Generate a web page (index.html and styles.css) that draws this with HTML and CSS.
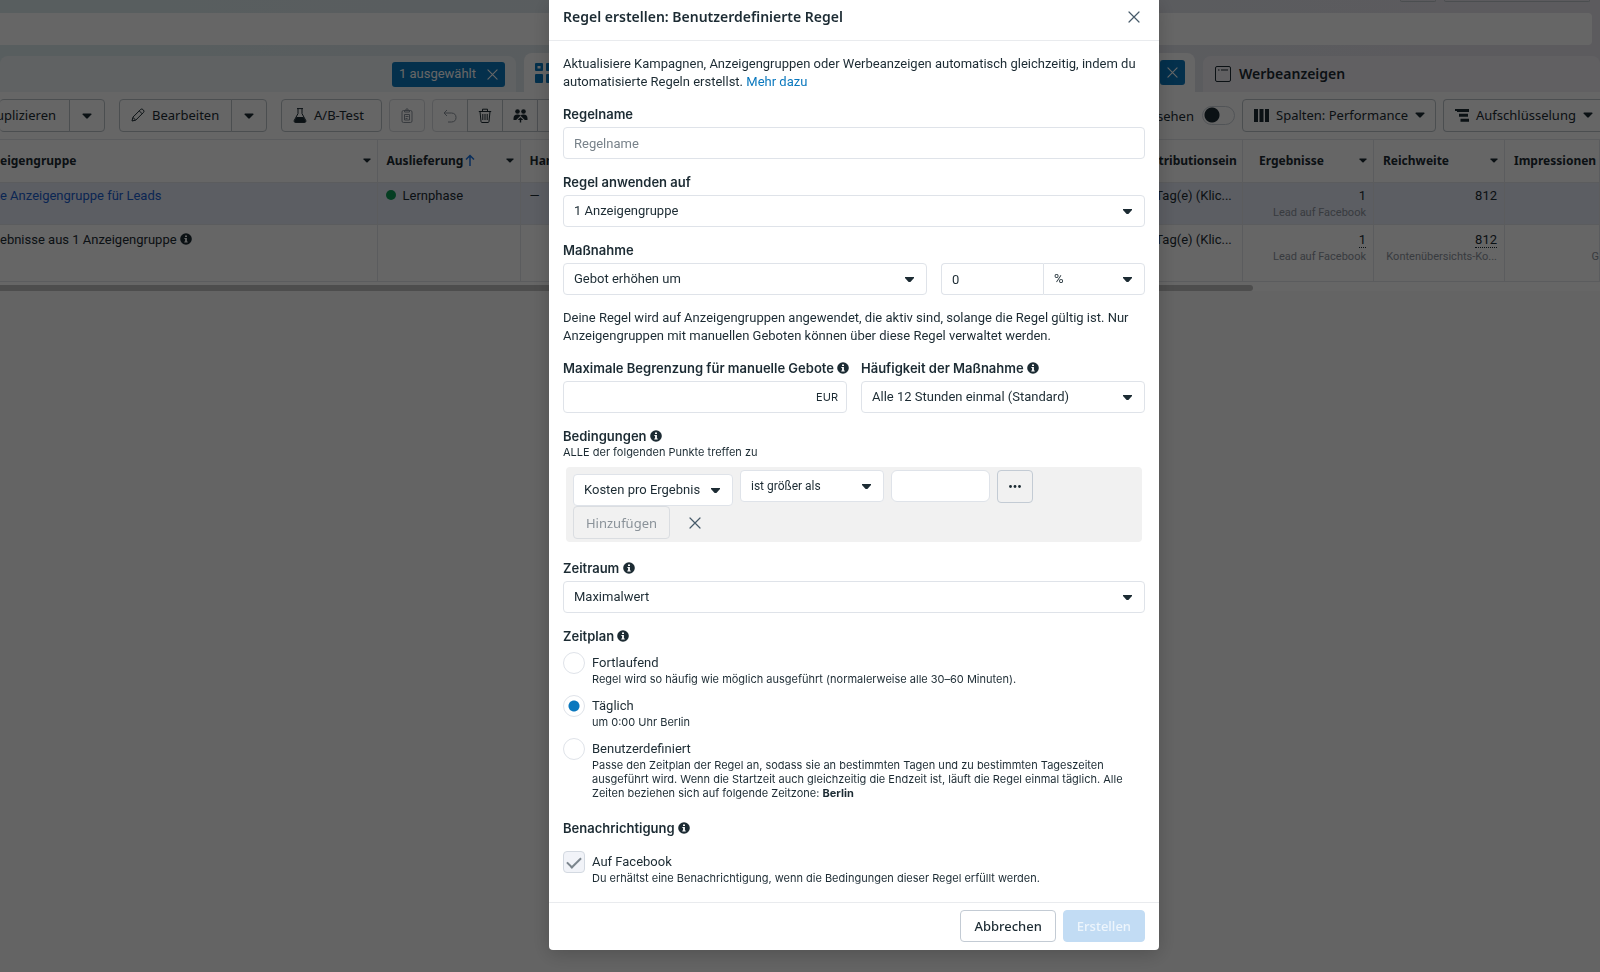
FILE: index.html
```html
<!DOCTYPE html>
<html lang="de">
<head>
  <meta charset="UTF-8" />
  <meta name="viewport" content="width=device-width, initial-scale=1.0"/>
  <title>Regel erstellen</title>
  <link rel="stylesheet" href="styles.css">
</head>
<body>

<!-- Icons -->
<svg class="icon-defs" aria-hidden="true">
  <symbol id="info" viewBox="0 0 12 12">
    <circle cx="6" cy="6" r="5.8" fill="currentColor"/>
    <path d="M5 2.4h2v1.7H5zM4.4 5h2.5v3.4h.8v1H4.3v-1h.8V6h-.7z" fill="#fff"/>
  </symbol>
  <symbol id="close" viewBox="0 0 12 12">
    <path d="M1 1l10 10M11 1L1 11" fill="none" stroke="currentColor" stroke-width="1.2" stroke-linecap="round"/>
  </symbol>
  <symbol id="caret" viewBox="0 0 10 6">
    <path d="M1 .4h8q.9.2.4 1.1L5.8 5.3q-.8.7-1.6 0L.6 1.500Q.1.6 1 .4z" fill="currentColor"/>
  </symbol>
</svg>

<div class="page">
  <header class="topbar">
    <div class="topbar-actions"><span class="stub small"></span><span class="stub"></span></div>
    <div class="search"></div>
  </header>

  <!-- Tabs -->
  <nav class="tabs">
    <div class="tab tab-left">
      <button class="pill">1 ausgewählt <svg width="11" height="11"><use href="#close"/></svg></button>
    </div>
    <div class="tab tab-active">
      <svg class="tab-icon" width="22" height="22" viewBox="0 0 22 22" fill="#0a78be">
        <path fill-rule="evenodd" d="M2 1h6q1 0 1 1v6q0 1-1 1H2Q1 9 1 8V2q0-1 1-1zm1.500 3v2.500H6.500V4z"/>
        <rect x="12" y="1" width="9" height="8" rx="1"/>
        <rect x="1" y="12" width="8" height="9" rx="1"/>
        <rect x="12" y="12" width="9" height="9" rx="1"/>
      </svg>
      <button class="pill" aria-label="Auswahl aufheben"><svg width="11" height="11"><use href="#close"/></svg></button>
    </div>
    <div class="tab tab-right">
      <svg width="16" height="16" viewBox="0 0 16 16" fill="none" stroke="#1c2b33">
        <rect x=".5" y=".5" width="15" height="15" rx="1.500"/>
        <path d="M3 4h1.500M6 4h7" stroke-width="1.200"/>
      </svg>
      <a href="#" class="tab-title">Werbeanzeigen</a>
    </div>
  </nav>

  <!-- Toolbar -->
  <div class="toolbar">
    <div class="btn-group group-first">
      <button class="tool">uplizieren</button>
      <button class="tool tool-caret" aria-label="Mehr"><svg width="10" height="6"><use href="#caret"/></svg></button>
    </div>
    <div class="btn-group group-edit">
      <button class="tool">
        <svg width="14" height="14" viewBox="0 0 14 14" fill="none" stroke="currentColor"><path d="M1 13l.9-3.800 7.700-7.700q1.200-1 2.300 0l.6.6q1 1.200 0 2.300L4.800 12.100zM8.300 2.900l2.900 2.900M2 9.500L4.600 12"/></svg>
        Bearbeiten
      </button>
      <button class="tool tool-caret" aria-label="Mehr"><svg width="10" height="6"><use href="#caret"/></svg></button>
    </div>
    <div class="btn-group group-test">
      <button class="tool">
        <svg width="14" height="15" viewBox="0 0 14 15"><path d="M4 .6h6M5 .6v5L1.200 12.500q-.6 1.700 1 1.900h9.600q1.600-.2 1-1.900L9 5.600v-5" fill="none" stroke="currentColor"/><path d="M3.500 9h7l2.300 4.100-1 1.400H2.200l-1-1.400z" fill="currentColor"/></svg>
        A/B-Test
      </button>
    </div>
    <div class="btn-group group-clip">
      <button class="tool tool-icon" disabled aria-label="Einfügen">
        <svg width="12" height="15" viewBox="0 0 12 15" fill="none" stroke="currentColor"><rect x="1" y="2.500" width="10" height="12" rx="1.500"/><path d="M3.500 4V2.500h1Q4.700.8 6 .8t1.500 1.700h1V4zM3.500 6.500h5v5.500h-5zM4.500 8.500h3M4.500 10.500h2"/></svg>
      </button>
    </div>
    <div class="btn-group group-icons">
      <button class="tool tool-icon" disabled aria-label="Rückgängig">
        <svg width="14" height="14" viewBox="0 0 14 14" fill="none" stroke="currentColor"><path d="M4 1L1 4l3 3M1 4h7.500q4.500.3 4.500 4.500t-4.500 4.500H5"/></svg>
      </button>
      <button class="tool tool-icon" aria-label="Löschen">
        <svg width="14" height="15" viewBox="0 0 14 15" fill="none" stroke="currentColor"><path d="M.8 3.500h12.400M4.500 3.500V1.200h5v2.300M2 3.500l1 10q.2 1 1 1h6q.8 0 1-1l1-10M4.800 6v6M7 6v6M9.200 6v6"/></svg>
      </button>
      <button class="tool tool-icon" aria-label="Zielgruppe">
        <svg width="15" height="15" viewBox="0 0 15 15" fill="currentColor"><circle cx="4.500" cy="3.500" r="2.300"/><circle cx="10.500" cy="3.500" r="2.300"/><path d="M.5 12v-1.500q0-4 4-4 2 0 3 1 1-1 3-1 4 0 4 4V12h-2.700L7.500 7.700 3.200 12zM7.500 9.200l2.800 2.800H8.200v2.500H6.800V12H4.700z"/></svg>
      </button>
      <button class="tool tool-icon" aria-label="Mehr"></button>
    </div>
    <div class="toolbar-right">
      <label class="switch-label">ansehen <input type="checkbox" class="switch"></label>
      <button class="tool tool-columns">
        <svg width="15" height="13" viewBox="0 0 15 13" fill="currentColor"><path d="M0 0h4v13H0zM5.500 0h4v13h-4zM11 0h4v13h-4z"/></svg>
        Spalten: Performance
        <svg width="10" height="6"><use href="#caret"/></svg>
      </button>
      <button class="tool tool-breakdown">
        <svg width="14" height="13" viewBox="0 0 14 13" fill="currentColor"><path d="M0 0h14v3H2V2H0zM4 4.800h9v3H4zM5.500 9.800H14v3H5.500z"/></svg>
        Aufschlüsselung
        <svg width="10" height="6"><use href="#caret"/></svg>
      </button>
    </div>
  </div>

  <!-- Table -->
  <table class="ads">
    <colgroup>
      <col class="c-name"><col class="c-status"><col><col class="c-attr"><col class="c-num"><col class="c-num"><col class="c-last">
    </colgroup>
    <thead>
      <tr>
        <th class="first"><span class="th">eigengruppe <svg width="8" height="5"><use href="#caret"/></svg></span></th>
        <th><span class="th"><span>Auslieferung<svg class="sort" width="10" height="12" viewBox="0 0 10 12" fill="none" stroke="#1b74e4" stroke-width="1.500"><path d="M5 12V1.500M1 5.500l4-4 4 4"/></svg></span> <svg width="8" height="5"><use href="#caret"/></svg></span></th>
        <th>Handlungen</th>
        <th>Attributionsein</th>
        <th class="indent"><span class="th">Ergebnisse <svg width="8" height="5"><use href="#caret"/></svg></span></th>
        <th><span class="th">Reichweite <svg width="8" height="5"><use href="#caret"/></svg></span></th>
        <th>Impressionen</th>
      </tr>
    </thead>
    <tbody>
      <tr class="selected">
        <td class="first"><a href="#">e Anzeigengruppe für Leads</a></td>
        <td><span class="dot"></span>Lernphase</td>
        <td>—</td>
        <td>7 Tag(e) (Klic...</td>
        <td class="num">1<small>Lead auf Facebook</small></td>
        <td class="num">812</td>
        <td></td>
      </tr>
      <tr class="total">
        <td class="first">ebnisse aus 1 Anzeigengruppe <svg width="12" height="12"><use href="#info"/></svg></td>
        <td></td>
        <td></td>
        <td>7 Tag(e) (Klic...</td>
        <td class="num"><span class="dotted">1</span><small>Lead auf Facebook</small></td>
        <td class="num"><span class="dotted">812</span><small>Kontenübersichts-Ko...</small></td>
        <td class="num last">&nbsp;<small>G</small></td>
      </tr>
    </tbody>
  </table>
  <div class="scrollbar"></div>
</div>

<!-- Modal -->
<div class="overlay">
  <form class="modal" role="dialog" aria-labelledby="modalTitle">
    <div class="modal-header">
      <h2 id="modalTitle">Regel erstellen: Benutzerdefinierte Regel</h2>
      <button type="button" class="close-btn" aria-label="Schließen"><svg width="12" height="12"><use href="#close"/></svg></button>
    </div>

    <div class="modal-body">
      <p>Aktualisiere Kampagnen, Anzeigengruppen oder Werbeanzeigen automatisch gleichzeitig, indem du automatisierte Regeln erstellst. <a href="#">Mehr dazu</a></p>

      <div class="field">
        <label class="label" for="ruleName">Regelname</label>
        <input type="text" class="input" id="ruleName" placeholder="Regelname">
      </div>

      <div class="field">
        <label class="label" for="applyTo">Regel anwenden auf</label>
        <span class="select"><select id="applyTo"><option>1 Anzeigengruppe</option></select></span>
      </div>

      <div class="field">
        <label class="label" for="action">Maßnahme</label>
        <div class="row">
          <span class="select action"><select id="action"><option>Gebot erhöhen um</option></select></span>
          <div class="joined">
            <input type="text" class="input" value="0" aria-label="Wert">
            <span class="select"><select aria-label="Einheit"><option>%</option></select></span>
          </div>
        </div>
      </div>

      <p>Deine Regel wird auf Anzeigengruppen angewendet, die aktiv sind, solange die Regel gültig ist. Nur Anzeigengruppen mit manuellen Geboten können über diese Regel verwaltet werden.</p>

      <div class="row halves">
        <div class="field">
          <label class="label" for="limit">Maximale Begrenzung für manuelle Gebote <svg width="12" height="12"><use href="#info"/></svg></label>
          <div class="input money"><input type="text" id="limit"><span>EUR</span></div>
        </div>
        <div class="field">
          <label class="label" for="frequency">Häufigkeit der Maßnahme <svg width="12" height="12"><use href="#info"/></svg></label>
          <span class="select"><select id="frequency"><option>Alle 12 Stunden einmal (Standard)</option></select></span>
        </div>
      </div>

      <div class="field conditions">
        <h3 class="label">Bedingungen <svg width="12" height="12"><use href="#info"/></svg></h3>
        <small>ALLE der folgenden Punkte treffen zu</small>
        <div class="condition-box">
          <div class="condition-row">
            <span class="select metric"><select aria-label="Kennzahl"><option>Kosten pro Ergebnis</option></select></span>
            <span class="select operator"><select aria-label="Operator"><option>ist größer als</option></select></span>
            <input type="text" class="input amount" aria-label="Betrag">
            <button type="button" class="more-btn" aria-label="Mehr">
              <svg width="12" height="3" viewBox="0 0 12 3" fill="currentColor"><circle cx="1.500" cy="1.500" r="1.400"/><circle cx="6" cy="1.500" r="1.400"/><circle cx="10.500" cy="1.500" r="1.400"/></svg>
            </button>
          </div>
          <div class="condition-add">
            <button type="button" class="add-btn" disabled>Hinzufügen</button>
            <button type="button" class="close-btn" aria-label="Entfernen"><svg width="12" height="12"><use href="#close"/></svg></button>
          </div>
        </div>
      </div>

      <div class="field">
        <label class="label" for="range">Zeitraum <svg width="12" height="12"><use href="#info"/></svg></label>
        <span class="select"><select id="range"><option>Maximalwert</option></select></span>
      </div>

      <div class="field schedule">
        <h3 class="label">Zeitplan <svg width="12" height="12"><use href="#info"/></svg></h3>
        <label class="choice">
          <input type="radio" name="schedule">
          <span>Fortlaufend<small>Regel wird so häufig wie möglich ausgeführt (normalerweise alle 30–60 Minuten).</small></span>
        </label>
        <label class="choice">
          <input type="radio" name="schedule" checked>
          <span>Täglich<small>um 0:00 Uhr Berlin</small></span>
        </label>
        <label class="choice">
          <input type="radio" name="schedule">
          <span>Benutzerdefiniert<small>Passe den Zeitplan der Regel an, sodass sie an bestimmten Tagen und zu bestimmten Tageszeiten ausgeführt wird. Wenn die Startzeit auch gleichzeitig die Endzeit ist, läuft die Regel einmal täglich. Alle Zeiten beziehen sich auf folgende Zeitzone: <b>Berlin</b></small></span>
        </label>
      </div>

      <div class="field notify">
        <h3 class="label">Benachrichtigung <svg width="12" height="12"><use href="#info"/></svg></h3>
        <label class="choice">
          <input type="checkbox" checked disabled>
          <span>Auf Facebook<small>Du erhältst eine Benachrichtigung, wenn die Bedingungen dieser Regel erfüllt werden.</small></span>
        </label>
      </div>
    </div>

    <div class="modal-footer">
      <button type="button" class="btn">Abbrechen</button>
      <button type="submit" class="btn btn-primary" disabled>Erstellen</button>
    </div>
  </form>
</div>

</body>
</html>
```
FILE: styles.css
```css
* {
  margin: 0;
  padding: 0;
  box-sizing: border-box;
}

body {
  font-family: Roboto, "Liberation Sans", sans-serif;
  font-size: 13px;
  line-height: 18px;
  color: #1c2b33;
  background-color: #fafafa;
  overflow: hidden;
}

button, input, select {
  font: inherit;
  color: inherit;
}

button {
  cursor: pointer;
}

a {
  color: #0a78be;
  text-decoration: none;
}

svg {
  flex-shrink: 0;
}

.icon-defs {
  display: none;
}

/* Top bar and tabs */
.page {
  background-color: #fff;
}

.topbar, .tabs {
  background: linear-gradient(to right, #dcebee, #e6e3ec);
}

.topbar-actions {
  display: flex;
  justify-content: flex-end;
  gap: 8px;
  height: 13px;
  padding-right: 10px;
}

.stub {
  width: 146px;
  height: 2px;
  border: 1px solid #bcc3c9;
  border-top: 0;
  border-radius: 0 0 4px 4px;
}

.stub.small {
  width: 36px;
}

.search {
  height: 32px;
  margin-right: 8px;
  background-color: #fff;
  border-radius: 0 4px 4px 0;
}

.tabs {
  display: flex;
  align-items: flex-end;
  gap: 8px;
  height: 47px;
}

.tab {
  display: flex;
  align-items: center;
  height: 36px;
  border-radius: 8px 8px 0 0;
  background-color: #f1f6f7;
}

.tab-left {
  width: 516px;
  justify-content: flex-end;
  padding-right: 11px;
}

.tab-active {
  flex: 1;
  justify-content: space-between;
  height: 39px;
  padding: 0 10px;
  background-color: #fff;
}

.tab-right {
  width: 397px;
  gap: 8px;
  padding-left: 12px;
  background-color: #f3f1f6;
}

.tab-title {
  color: #1c2b33;
  font: 600 14px/20px "Noto Sans", sans-serif;
}

.pill {
  display: flex;
  align-items: center;
  gap: 11px;
  height: 25px;
  padding: 0 7px;
  border: 0;
  border-radius: 3px;
  background-color: #0a78be;
  color: #fff;
}

/* Toolbar */
.toolbar {
  display: flex;
  align-items: flex-start;
  height: 47px;
  padding-top: 7px;
  font-family: "Noto Sans", sans-serif;
}

.btn-group {
  display: flex;
}

.tool {
  display: flex;
  align-items: center;
  gap: 7px;
  height: 33px;
  padding: 0 13px 1px 11px;
  border: 1px solid #bcc3c9;
  border-radius: 4px;
  background-color: #fff;
  white-space: nowrap;
}

.btn-group .tool + .tool {
  margin-left: -1px;
  border-top-left-radius: 0;
  border-bottom-left-radius: 0;
}

.btn-group .tool:not(:last-child) {
  border-top-right-radius: 0;
  border-bottom-right-radius: 0;
}

.tool-caret, .btn-group .tool-icon {
  width: 36px;
  padding: 0;
  justify-content: center;
}

.tool:disabled {
  color: #8d949e;
  border-color: #dadde1;
}

.group-first .tool:first-child {
  width: 70px;
  padding-left: 0;
  justify-content: flex-end;
  border-left: 0;
}

.group-edit {
  margin-left: 14px;
}

.group-edit .tool:first-child {
  width: 113px;
}

.group-test {
  width: 101px;
  margin-left: 14px;
}

.group-test .tool {
  flex: 1;
}

.group-clip, .group-icons {
  margin-left: 7px;
}

.toolbar-right {
  display: flex;
  align-items: center;
  gap: 7px;
  margin-left: auto;
}

.switch-label {
  display: flex;
  align-items: center;
  gap: 8px;
}

.switch {
  appearance: none;
  width: 33px;
  height: 19px;
  border: 1px solid #cbd2d9;
  border-radius: 10px;
  background: radial-gradient(circle at 9px 8px, #1c2b33 7px, transparent 8px);
}

.tool-columns {
  width: 194px;
  justify-content: space-between;
}

.tool-breakdown {
  width: 157px;
  justify-content: space-between;
  border-right: 0;
  border-radius: 4px 0 0 4px;
}

/* Table */
.ads {
  width: 100%;
  table-layout: fixed;
  border-collapse: collapse;
}

.c-name { width: 377px; }
.c-status { width: 143px; }
.c-attr { width: 107px; }
.c-num { width: 131px; }
.c-last { width: 95px; }

.ads th, .ads td {
  padding: 0 9px;
  border: 1px solid #e4e6eb;
  border-width: 1px 1px 1px 0;
  text-align: left;
  white-space: nowrap;
  overflow: hidden;
}

.ads th {
  height: 43px;
  padding-right: 6px;
  padding-bottom: 1px;
  font: bold 12px/18px "Noto Sans", sans-serif;
}

.ads td {
  height: 42px;
  padding-top: 4px;
  vertical-align: top;
}

.ads .first {
  padding-left: 0;
}

.ads .indent {
  padding-left: 16px;
}

.th {
  display: flex;
  align-items: center;
  justify-content: space-between;
}

.sort {
  margin-left: 2px;
}

.selected td {
  background-color: #e6ebf8;
}

.ads .selected a {
  color: #1b5fd0;
}

.ads .total td {
  height: 57px;
  padding-top: 6px;
}

.ads svg {
  vertical-align: -1px;
}

.ads .num {
  padding-left: 0;
  padding-right: 7px;
  text-align: right;
}

.ads .last {
  padding-right: 0;
}

.ads small {
  display: block;
  font-size: 11px;
  line-height: 16px;
  color: #8d949e;
}

.dotted {
  border-bottom: 1px dotted #1c2b33;
}

.dot {
  display: inline-block;
  width: 10px;
  height: 10px;
  margin: 0 7px 0 -1px;
  border-radius: 50%;
  background-color: #0e9b56;
}

.scrollbar {
  width: 1253px;
  height: 6px;
  margin-top: 3px;
  border-radius: 0 3px 3px 0;
  background-color: #c1c1c1;
}

/* Modal */
.overlay {
  position: fixed;
  inset: 0;
  display: flex;
  justify-content: center;
  align-items: flex-start;
  padding-left: 108px;
  background-color: rgba(0, 0, 0, 0.6);
}

.modal {
  width: 610px;
  border-radius: 0 0 4px 4px;
  background-color: #fff;
  box-shadow: 0 4px 20px rgba(0, 0, 0, 0.2);
}

.modal-header {
  display: flex;
  align-items: center;
  justify-content: space-between;
  padding: 5px 14px 11px;
  border-bottom: 1px solid #e9ebee;
}

.modal-header h2 {
  font: 600 14px/24px "Noto Sans", sans-serif;
}

.close-btn {
  display: flex;
  padding: 5px;
  border: 0;
  background: none;
  color: #465a69;
}

.modal-body {
  padding: 14px 14px 17px;
}

.modal-body p {
  margin-bottom: 14px;
}

.field {
  margin-bottom: 14px;
}

.label {
  display: block;
  margin-bottom: 4px;
  font-family: Inter, sans-serif;
  font-size: 13px;
  font-weight: 600;
  white-space: nowrap;
}

.label svg {
  vertical-align: -1px;
}

.input, .select select {
  display: block;
  width: 100%;
  height: 32px;
  padding: 0 10px;
  border: 1px solid #dfe3e9;
  border-radius: 4px;
  background-color: #fff;
  outline: none;
}

.input::placeholder {
  color: #78828a;
}

.select {
  display: block;
  position: relative;
}

.select select {
  appearance: none;
}

.select::after {
  content: '';
  position: absolute;
  top: 14px;
  right: 13px;
  width: 9px;
  height: 5px;
  background-color: #1c2b33;
  clip-path: polygon(0 0, 100% 0, 100% 20%, 60% 100%, 40% 100%, 0 20%);
  pointer-events: none;
}

.row {
  display: flex;
  gap: 14px;
}

.halves .field {
  flex: 1;
  min-width: 0;
}

.action {
  flex: 1;
}

.joined {
  display: grid;
  grid-template-columns: 1fr 1fr;
  width: 204px;
}

.joined .input {
  border-right: 0;
  border-radius: 4px 0 0 4px;
}

.joined select {
  border-radius: 0 4px 4px 0;
}

.money {
  display: flex;
  align-items: center;
  padding-right: 8px;
  font-family: Inter, sans-serif;
  font-size: 11px;
}

.money input {
  flex: 1;
  min-width: 0;
  border: 0;
  outline: none;
}

.modal small {
  display: block;
  font-family: Inter, sans-serif;
  font-size: 11px;
  line-height: 14px;
}

.conditions {
  margin-bottom: 17px;
}

.conditions .label {
  margin-bottom: 0;
}

.condition-box {
  margin: 8px 3px 0;
  padding: 3px 7px;
  border-radius: 4px;
  background-color: #f1f1f1;
}

.condition-row {
  display: flex;
  gap: 7px;
}

.metric {
  width: 160px;
  padding-top: 4px;
}

.metric::after {
  top: 18px;
}

.operator {
  width: 144px;
  font-size: 12px;
}

.condition-row .amount {
  width: 99px;
  border-radius: 6px;
}

.more-btn {
  display: flex;
  align-items: center;
  justify-content: center;
  width: 36px;
  height: 33px;
  border: 1px solid #c3cbd4;
  border-radius: 4px;
  background: none;
}

.condition-add {
  display: flex;
  align-items: center;
  gap: 14px;
}

.add-btn {
  height: 33px;
  width: 97px;
  border: 1px solid #dadde1;
  border-radius: 4px;
  background: none;
  color: #8a9299;
  font-family: "Noto Sans", sans-serif;
}

.schedule {
  margin-bottom: 19px;
}

.schedule .label {
  margin-bottom: 7px;
}

.choice {
  display: flex;
  gap: 7px;
}

.choice + .choice {
  margin-top: 9px;
}

.choice span {
  flex: 1;
  padding-top: 2px;
}

.choice input {
  appearance: none;
  flex-shrink: 0;
  width: 22px;
  height: 22px;
  border: 1px solid #dfe3e9;
  border-radius: 50%;
}

.choice input[type="radio"]:checked {
  background: radial-gradient(circle, #0a78be 5px, transparent 6px);
}

.choice input[type="checkbox"] {
  display: grid;
  place-items: center;
  border-color: #d3d9e1;
  border-radius: 4px;
  background-color: #f1f3f8;
}

/* Check mark */
.choice input[type="checkbox"]::after {
  content: '';
  width: 12px;
  height: 6px;
  margin-bottom: 3px;
  border: solid #7b858d;
  border-width: 0 0 2px 2px;
  transform: rotate(-45deg);
}

.notify {
  margin-bottom: 0;
}

.notify .label {
  margin-bottom: 14px;
}

.modal-footer {
  display: flex;
  justify-content: flex-end;
  gap: 7px;
  padding: 7px 14px 8px;
  border-top: 1px solid #e9ebee;
}

.btn {
  height: 32px;
  padding: 0 13px;
  border: 1px solid #c3cbd4;
  border-radius: 4px;
  background-color: #fff;
  font-family: "Noto Sans", sans-serif;
  font-weight: 500;
}

.btn-primary {
  border-color: #c2dcf4;
  background-color: #c2dcf4;
  color: #edf5fc;
}
```
